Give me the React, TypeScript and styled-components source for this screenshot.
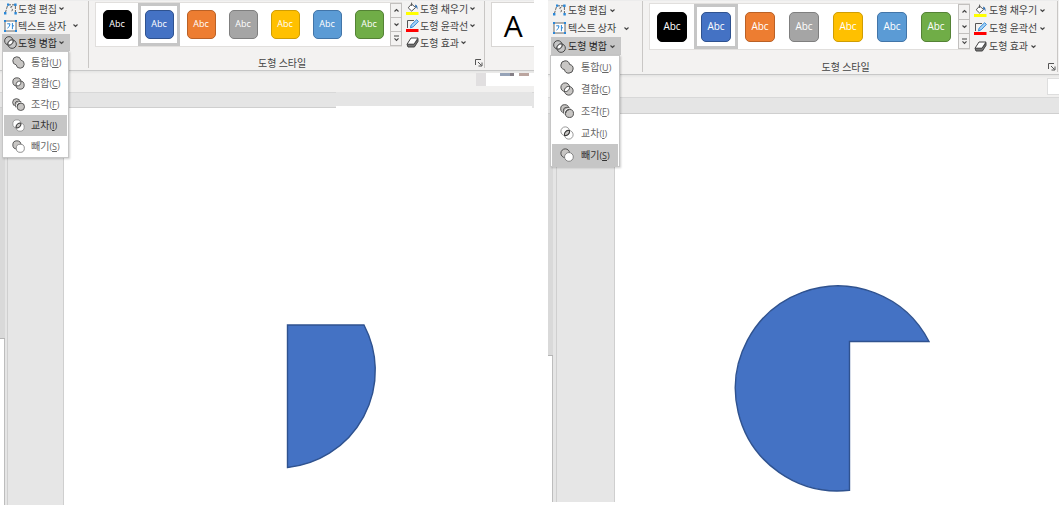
import React from "react";
import styled, { createGlobalStyle } from "styled-components";

const GlobalStyle = createGlobalStyle`
  *, *::before, *::after { box-sizing: border-box; }
  body {
    margin: 0;
    background: #ffffff;
    font-family: "Noto Sans CJK KR", "Noto Sans", sans-serif;
    font-size: 10px;
    color: #444444;
  }
  button { font: inherit; color: inherit; margin: 0; padding: 0; border: 0; background: none; }
`;

type Metrics = {
  top: number;
  row: number;
  tools: number;
  toolsStart: number;
  gap: number;
  formatsEnd: number;
  ribbon: number;
  strip: number;
  ruler: number;
  cell: number;
  swatch: number;
  gallery: number;
  abc: number;
  item: number;
  menuWidth: number;
  icon: number;
  itemGap: number;
  gutter: number;
  vruler: number;
  vrulerWidth: number;
};

const LEFT: Metrics = {
  top: 0, row: 17, tools: 88, toolsStart: 2, gap: 1, formatsEnd: 3, ribbon: 71, strip: 21, ruler: 16,
  cell: 42, swatch: 29, gallery: 45, abc: 9, item: 21, menuWidth: 67, icon: 13, itemGap: 6,
  gutter: 56, vruler: 231, vrulerWidth: 8,
};

const RIGHT: Metrics = {
  top: 1, row: 18, tools: 94, toolsStart: 3, gap: 2, formatsEnd: 6, ribbon: 75, strip: 22, ruler: 17,
  cell: 44, swatch: 30, gallery: 47, abc: 10, item: 22, menuWidth: 70, icon: 14, itemGap: 7,
  gutter: 58, vruler: 242, vrulerWidth: 9,
};

type M = { $m: Metrics };

const Page = styled.main`
  display: flex;
  gap: 14px;
  min-height: 100vh;
`;

const Pane = styled.section<{ $grow: number; $end: number }>`
  position: relative;
  display: flex;
  flex-direction: column;
  flex: ${(p) => p.$grow} 1 0;
  min-width: 0;
  overflow: hidden;
  margin-bottom: ${(p) => p.$end}px;
`;

const Ribbon = styled.header<M>`
  display: flex;
  height: ${(p) => p.$m.ribbon}px;
  background: #f3f2f1;
  border-top: 1px solid #ececec;
  border-bottom: 1px solid #c8c8c8;
`;

const Tools = styled.div<M>`
  display: flex;
  flex-direction: column;
  flex: none;
  width: ${(p) => p.$m.tools}px;
  margin-top: ${(p) => p.$m.top - 1}px;
  padding-left: ${(p) => p.$m.toolsStart}px;
`;

const Command = styled.button<M & { $active?: boolean }>`
  display: flex;
  align-items: center;
  align-self: flex-start;
  gap: ${(p) => p.$m.gap}px;
  height: ${(p) => p.$m.row}px;
  padding: 0 5px 0 2px;
  line-height: 12px;
  white-space: nowrap;
  background: ${(p) => (p.$active ? "#c6c6c6" : "transparent")};
  color: ${(p) => (p.$active ? "#262626" : "#444444")};
`;

const Group = styled.div`
  display: flex;
  flex-direction: column;
  flex: none;
  border-left: 1px solid #c9c7c5;
  border-right: 1px solid #c9c7c5;
  margin-bottom: 2px;
`;

const GroupBody = styled.div`
  display: flex;
  flex: 1;
  padding-left: 6px;
`;

const GroupFooter = styled.footer`
  display: flex;
  align-items: center;
  height: 10px;
  line-height: 10px;
`;

const GroupLabel = styled.span`
  flex: 1;
  text-align: center;
`;

const Launcher = styled.button`
  display: flex;
  margin-right: 1px;
`;

const Gallery = styled.div<M>`
  display: flex;
  height: ${(p) => p.$m.gallery}px;
  margin-top: ${(p) => p.$m.top + 1}px;
  background: #ffffff;
  border: 1px solid #e1dfdd;
  border-right: 0;
`;

const StyleCell = styled.button<M & { $selected: boolean }>`
  display: flex;
  align-items: center;
  justify-content: center;
  width: ${(p) => p.$m.cell}px;
  height: 100%;
  border: 3px solid ${(p) => (p.$selected ? "#c6c6c6" : "transparent")};
`;

const Swatch = styled.span<M & { $fill: string; $edge: string }>`
  width: ${(p) => p.$m.swatch}px;
  height: ${(p) => p.$m.swatch}px;
  border: 1px solid ${(p) => p.$edge};
  border-radius: 5px;
  background: ${(p) => p.$fill};
  color: #ffffff;
  font: ${(p) => p.$m.abc}px/26px "Open Sans", sans-serif;
  text-align: center;
`;

const Scroller = styled.div`
  display: flex;
  flex-direction: column;
  width: 12px;
`;

const ScrollButton = styled.button`
  display: flex;
  flex: 1;
  align-items: center;
  justify-content: center;
  background: #f3f2f1;
  border: 1px solid #c2c0be;
  & + & { border-top: 0; }
`;

const Formats = styled.div<M>`
  display: flex;
  flex-direction: column;
  margin-top: ${(p) => p.$m.top - 1}px;
  padding: 0 ${(p) => p.$m.formatsEnd}px 0 2px;
`;

const WordArt = styled.button`
  flex: 1;
  height: 45px;
  margin: 1px 0 0 6px;
  background: #ffffff;
  border: 1px solid #d8d6d4;
  border-right: 0;
  color: #000000;
  font: 30px/46px "Open Sans", sans-serif;
`;

const Strip = styled.div<M>`
  display: flex;
  justify-content: flex-end;
  height: ${(p) => p.$m.strip}px;
  padding-top: 2px;
  background: linear-gradient(#e4e4e3, #f1f0ef 3px);
`;

const Fragment = styled.div`
  display: flex;
  align-items: flex-start;
  width: 48px;
  height: 13px;
  padding-left: 14px;
  background: #ffffff;
`;

const FragmentEdge = styled.div`
  width: 10px;
  height: 13px;
  background: #e1dfe0;
`;

const Chip = styled.span<{ $w: number; $c: string; $h?: number; $gap?: number }>`
  width: ${(p) => p.$w}px;
  height: ${(p) => p.$h ?? 3}px;
  margin-left: ${(p) => p.$gap ?? 0}px;
  background: ${(p) => p.$c};
`;

const PageTab = styled.div`
  width: 12px;
  height: 17px;
  margin-top: 1px;
  background: #ffffff;
  border: 1px solid #dedede;
  border-right: 0;
`;

const Ruler = styled.div<M>`
  display: flex;
  height: ${(p) => p.$m.ruler}px;
  background: #e5e5e5;
  border-top: 1px solid #d8d8d8;
`;

const RulerLine = styled.div<{ $part: number }>`
  width: ${(p) => p.$part}%;
  border-bottom: 1px solid #cfcfcf;
`;

const RulerPatch = styled.div`
  flex: 1;
  margin: -1px 2px 0 0;
  background: #e5e5e5;
  border-bottom: 2px solid #ffffff;
`;

const Workspace = styled.div`
  display: flex;
  flex: 1;
`;

const VerticalRuler = styled.div<M>`
  width: ${(p) => p.$m.vrulerWidth}px;
  border-right: 1px solid #cfcfcf;
  background: #e5e5e5;
`;

const RulerMargin = styled.div<M>`
  width: 5px;
  height: ${(p) => p.$m.vruler}px;
  background: #d9d9d9;
  border-bottom: 1px solid #b5b5b5;
`;

const RulerPage = styled.div<M>`
  width: 5px;
  height: calc(100% - ${(p) => p.$m.vruler}px);
  background: #ffffff;
  border-right: 1px solid #bdbdbd;
`;

const Gutter = styled.div<M>`
  width: ${(p) => p.$m.gutter}px;
  background: #e6e6e6;
  border-right: 1px solid #cfcfcf;
`;

const Canvas = styled.div`
  position: relative;
  flex: 1;
  background: #ffffff;
`;

const Shape = styled.svg<{ $x: number; $y: number }>`
  position: absolute;
  left: ${(p) => p.$x}px;
  top: ${(p) => p.$y}px;
  fill: #4472c4;
  stroke: #2f528f;
  stroke-width: 1.4;
`;

const Menu = styled.div<M & { $x: number; $y: number }>`
  position: absolute;
  left: ${(p) => p.$x}px;
  top: ${(p) => p.$y}px;
  width: ${(p) => p.$m.menuWidth}px;
  padding: 0 1px;
  background: #ffffff;
  border: 1px solid #c6c6c6;
  box-shadow: 1px 1px 2px rgba(0, 0, 0, 0.2);
`;

const MenuItem = styled.button<M & { $active: boolean }>`
  display: flex;
  align-items: center;
  gap: ${(p) => p.$m.itemGap}px;
  width: 100%;
  height: ${(p) => p.$m.item}px;
  padding-left: 8px;
  line-height: 12px;
  white-space: nowrap;
  background: ${(p) => (p.$active ? "#c6c6c6" : "transparent")};
  color: ${(p) => (p.$active ? "#333333" : "#666666")};
`;

const Key = styled.span`
  font: 9px/12px "Open Sans", sans-serif;
`;

type MergeKind = "union" | "combine" | "fragment" | "intersect" | "subtract";

const LENS = "M5.1 10.9A5 5 0 0 1 10.9 5.1A5 5 0 0 1 5.1 10.9Z";

function MergeIcon({ kind, size }: { kind: MergeKind; size: number }) {
  const grey = "#c8c6c4";
  const line = { stroke: "#4a4a4a", strokeWidth: 1.1 };
  return (
    <svg width={size} height={size} viewBox="0 0 16 16" fill="none" aria-hidden="true">
      {kind === "union" && (
        <path d="M10.9 5.1A5 5 0 1 0 5.1 10.9A5 5 0 1 0 10.9 5.1Z" fill={grey} {...line} />
      )}
      {kind === "combine" && (
        <>
          <circle cx="6" cy="6" r="5" fill={grey} />
          <circle cx="10" cy="10" r="5" fill={grey} />
          <path d={LENS} fill="#ffffff" />
          <circle cx="6" cy="6" r="5" {...line} />
          <circle cx="10" cy="10" r="5" {...line} />
        </>
      )}
      {kind === "fragment" && (
        <>
          <circle cx="5.4" cy="5.4" r="4.6" fill={grey} {...line} />
          <circle cx="8.2" cy="8.2" r="5.2" fill="#ffffff" />
          <circle cx="8" cy="8" r="4.4" fill="#b0aeac" {...line} />
          <circle cx="10.2" cy="10.2" r="5.4" fill="#ffffff" />
          <circle cx="10.8" cy="10.8" r="4.6" fill={grey} {...line} />
          <path d="M6.4 10.6A4.6 4.6 0 0 1 10.6 6.4" {...line} />
        </>
      )}
      {kind === "intersect" && (
        <>
          <circle cx="6" cy="6" r="5" fill="#ffffff" />
          <circle cx="10" cy="10" r="5" fill="#ffffff" />
          <circle cx="6" cy="6" r="5" stroke="#8a8a8a" />
          <circle cx="10" cy="10" r="5" stroke="#8a8a8a" />
          <path d={LENS} fill={grey} stroke="#3a3a3a" strokeWidth="1.2" />
        </>
      )}
      {kind === "subtract" && (
        <>
          <circle cx="6" cy="6" r="5" fill={grey} {...line} />
          <circle cx="10.2" cy="10.2" r="5" fill="#ffffff" stroke="#777777" />
        </>
      )}
    </svg>
  );
}

const MergeShapesIcon = () => (
  <svg width="13" height="13" viewBox="0 0 16 16" fill="none" stroke="#444444" strokeWidth="1.2" aria-hidden="true">
    <circle cx="6" cy="6" r="5.2" />
    <circle cx="10" cy="10" r="5.2" />
    <path d="M4.9 11.1A5.2 5.2 0 0 1 11.1 4.9A5.2 5.2 0 0 1 4.9 11.1Z" fill="#ffffff" />
  </svg>
);

const EditShapeIcon = () => (
  <svg width="13" height="12" viewBox="0 0 13 12" fill="none" aria-hidden="true">
    <path d="M4 1.8H11M3.4 3L1.4 9.6M8.4 3.2Q5.6 3.6 7.4 5.4Q9.8 6.6 7.2 8.6M11.4 3V9" stroke="#666666" strokeDasharray="3 1" />
    <path d="M3 .6h2.2v2.2H3zM10.2 .6h2.4v2.4h-2.4zM0 9h2.4v2.4H0zM10.4 9h2.4v2.4h-2.4z" fill="#2b88d8" />
  </svg>
);

const TextBoxIcon = () => (
  <svg width="13" height="12" viewBox="0 0 13 12" fill="none" aria-hidden="true">
    <rect x="1" y="1" width="11" height="10" fill="#ffffff" stroke="#666666" />
    <path d="M0 0h2v2H0zM11 0h2v2h-2zM0 10h2v2H0zM11 10h2v2h-2z" fill="#2b88d8" />
    <path d="M3.2 3.8H6Q6 6.8 3.4 8.2M8.4 3V9.2M8.4 5.8H10" stroke="#2b88d8" />
  </svg>
);

const FillIcon = () => (
  <svg width="13" height="13" viewBox="0 0 13 13" fill="none" aria-hidden="true">
    <path d="M5.6 2L9.6 5.6L5.6 9L2.2 5.8ZM5.6 4V.6" fill="#ffffff" stroke="#555555" />
    <path d="M9.4 2.6Q12 3.8 11.4 7.4Q10.6 5 9 4.6Z" fill="#2b6cb0" />
    <path d="M0 10h12.5v3H0z" fill="#ffff00" />
  </svg>
);

const OutlineIcon = () => (
  <svg width="13" height="13" viewBox="0 0 13 13" fill="none" aria-hidden="true">
    <path d="M8 1.5H1.5V9" stroke="#555555" />
    <path d="M4.4 8.8L5.2 6L10.6 .8L12.4 2.4L7.2 7.8Z" fill="#a9d3f5" stroke="#2b88d8" />
    <path d="M0 10h12.5v3H0z" fill="#ff0000" />
  </svg>
);

const EffectIcon = () => (
  <svg width="13" height="13" viewBox="0 0 13 13" strokeLinejoin="round" aria-hidden="true">
    <path d="M1 8.4H8L12 2.8V5.4L8.4 11H2Z" fill="#777777" stroke="#444444" />
    <path d="M5 2H12L8 8.2H1Z" fill="#ffffff" stroke="#444444" />
  </svg>
);

const Chevron = ({ up = false, bar = false }: { up?: boolean; bar?: boolean }) => (
  <svg width="7" height="7" viewBox="0 0 7 7" fill="none" stroke="#444444" strokeWidth="1.1" aria-hidden="true">
    <path d={up ? "M1.5 4.5L3.5 2.5L5.5 4.5" : bar ? "M1 1H6M1.5 3.4L3.5 5.4L5.5 3.4" : "M1.5 2.5L3.5 4.5L5.5 2.5"} />
  </svg>
);

const LauncherIcon = () => (
  <svg width="8" height="8" viewBox="0 0 8 8" fill="none" stroke="#555555" aria-hidden="true">
    <path d="M.5 6V.5H6M3 3L6.5 6.5M7 3.5V7H3.5" />
  </svg>
);

const STYLES = [
  ["#000000", "#000000"],
  ["#4472c4", "#2f528f"],
  ["#ed7d31", "#ba6126"],
  ["#a5a5a5", "#7f7f7f"],
  ["#ffc000", "#cf9d04"],
  ["#5b9bd5", "#4275a8"],
  ["#70ad47", "#548235"],
];

const MERGES: { kind: MergeKind; label: string; keyName: string }[] = [
  { kind: "union", label: "통합", keyName: "U" },
  { kind: "combine", label: "결합", keyName: "C" },
  { kind: "fragment", label: "조각", keyName: "F" },
  { kind: "intersect", label: "교차", keyName: "I" },
  { kind: "subtract", label: "빼기", keyName: "S" },
];

function RibbonBar({ m, wordArt }: { m: Metrics; wordArt?: boolean }) {
  return (
    <Ribbon $m={m}>
      <Tools $m={m}>
        <Command $m={m}><EditShapeIcon />도형 편집<Chevron /></Command>
        <Command $m={m}><TextBoxIcon />텍스트 상자&nbsp;&nbsp;<Chevron /></Command>
        <Command $m={m} $active aria-expanded="true"><MergeShapesIcon />도형 병합<Chevron /></Command>
      </Tools>
      <Group>
        <GroupBody>
          <Gallery $m={m}>
            {STYLES.map(([fill, edge], i) => (
              <StyleCell key={fill} $m={m} $selected={i === 1}>
                <Swatch $m={m} $fill={fill} $edge={edge}>Abc</Swatch>
              </StyleCell>
            ))}
            <Scroller>
              <ScrollButton aria-label="위로"><Chevron up /></ScrollButton>
              <ScrollButton aria-label="아래로"><Chevron /></ScrollButton>
              <ScrollButton aria-label="자세히"><Chevron bar /></ScrollButton>
            </Scroller>
          </Gallery>
          <Formats $m={m}>
            <Command $m={m}><FillIcon />도형 채우기<Chevron /></Command>
            <Command $m={m}><OutlineIcon />도형 윤곽선<Chevron /></Command>
            <Command $m={m}><EffectIcon />도형 효과<Chevron /></Command>
          </Formats>
        </GroupBody>
        <GroupFooter>
          <GroupLabel>도형 스타일</GroupLabel>
          <Launcher aria-label="도형 서식"><LauncherIcon /></Launcher>
        </GroupFooter>
      </Group>
      {wordArt && <WordArt>A</WordArt>}
    </Ribbon>
  );
}

function MergeMenu({ m, x, y, active }: { m: Metrics; x: number; y: number; active: MergeKind }) {
  return (
    <Menu $m={m} $x={x} $y={y} role="menu">
      {MERGES.map(({ kind, label, keyName }) => (
        <MenuItem key={kind} role="menuitem" $m={m} $active={kind === active}>
          <MergeIcon kind={kind} size={m.icon} />
          <span>{label}<Key>(<u>{keyName}</u>)</Key></span>
        </MenuItem>
      ))}
    </Menu>
  );
}

function SideRuler({ m }: { m: Metrics }) {
  return (
    <VerticalRuler $m={m}>
      <RulerMargin $m={m} />
      <RulerPage $m={m} />
    </VerticalRuler>
  );
}

export default function App() {
  return (
    <>
      <GlobalStyle />
      <Page>
        <Pane $grow={534} $end={0}>
          <RibbonBar m={LEFT} wordArt />
          <Strip $m={LEFT}>
            <FragmentEdge />
            <Fragment>
              <Chip $w={10} $c="#96a3b8" />
              <Chip $w={4} $c="#857f86" />
              <Chip $w={10} $c="#bba59f" $gap={5} />
            </Fragment>
          </Strip>
          <Ruler $m={LEFT}>
            <RulerLine $part={63} />
            <RulerPatch />
          </Ruler>
          <Workspace>
            <SideRuler m={LEFT} />
            <Gutter $m={LEFT} />
            <Canvas>
              <Shape $x={216} $y={210} width="100" height="156" viewBox="280 318 100 156">
                <path d="M287.5 325H364A97.5 97.5 0 0 1 287.5 467.5Z" />
              </Shape>
            </Canvas>
          </Workspace>
          <MergeMenu m={LEFT} x={2} y={51} active="intersect" />
        </Pane>
        <Pane $grow={511} $end={3}>
          <RibbonBar m={RIGHT} />
          <Strip $m={RIGHT}>
            <PageTab />
          </Strip>
          <Ruler $m={RIGHT}>
            <RulerLine $part={100} />
          </Ruler>
          <Workspace>
            <SideRuler m={RIGHT} />
            <Gutter $m={RIGHT} />
            <Canvas>
              <Shape $x={115} $y={166} width="206" height="216" viewBox="730 280 206 216">
                <path d="M849.5 341.5H929A102.5 102.5 0 1 0 849.5 490.3Z" />
              </Shape>
            </Canvas>
          </Workspace>
          <MergeMenu m={RIGHT} x={2} y={55} active="subtract" />
        </Pane>
      </Page>
    </>
  );
}
